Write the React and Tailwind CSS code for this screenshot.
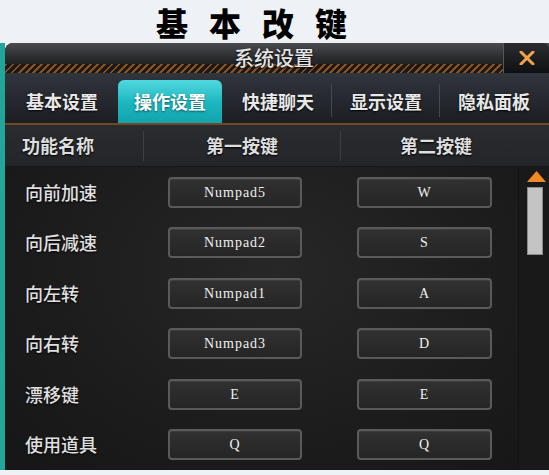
import React from 'react';

const tabs = ['基本设置', '操作设置', '快捷聊天', '显示设置', '隐私面板'];

const rows = [
  ['向前加速', 'Numpad5', 'W'],
  ['向后减速', 'Numpad2', 'S'],
  ['向左转', 'Numpad1', 'A'],
  ['向右转', 'Numpad3', 'D'],
  ['漂移键', 'E', 'E'],
  ['使用道具', 'Q', 'Q'],
];

const cjk = { fontFamily: '"Noto Sans CJK SC", "Noto Sans", sans-serif' };
const keyFont = { fontFamily: '"Liberation Serif", "DejaVu Serif", serif' };

function KeyBox({ label, w }) {
  return (
    <div
      className={`${w} h-[31px] rounded-[4px] border-2 border-[#5a5a5a] bg-gradient-to-b from-[#313131] to-[#252525] flex items-center justify-center text-[14px] tracking-[1px] text-[#f0f0f0] shadow-[inset_0_1px_0_rgba(255,255,255,0.06)]`}
      style={keyFont}
    >
      {label}
    </div>
  );
}

export default function App() {
  return (
    <div className="w-[549px] h-[475px] bg-[#eef1f5] flex flex-col overflow-hidden" style={cjk}>
      {/* page heading */}
      <div className="h-[47px] flex items-center pl-[156px]">
        <span className="text-[32px] leading-[40px] font-black tracking-[21px] text-black">基本改键</span>
      </div>

      {/* window */}
      <div className="flex-1 mb-[5px] border-l-[5px] border-[#22a699] flex">
        <div className="flex-1 flex flex-col bg-[#1c1c1c] rounded-tl-[8px] overflow-hidden">
          {/* title bar */}
          <div className="h-[30px] flex bg-gradient-to-b from-[#4a4c50] via-[#2a2b2e] to-[#141517]">
            <div className="flex-1 flex flex-col">
              <div className="h-[21px] flex items-end justify-center">
                <span className="text-[20px] leading-none font-medium text-[#e4e4e4] translate-y-[4px] translate-x-[20px] [text-shadow:0_1px_2px_#000]">系统设置</span>
              </div>
              <div className="h-[9px] bg-[repeating-linear-gradient(135deg,#8a5220_0px,#8a5220_2px,#1b1a19_2px,#1b1a19_5px)]" />
            </div>
            <div className="w-[46px] flex items-center justify-center bg-gradient-to-b from-[#2c2d30] to-[#0f1012] rounded-tr-[6px] border-l border-[#55575c]">
              <svg width="16" height="14" viewBox="0 0 16 14">
                <path d="M2 1 L14 13 M14 1 L2 13" stroke="#f2a24a" strokeWidth="3" strokeLinecap="round" />
              </svg>
            </div>
          </div>

          {/* tabs */}
          <div className="h-[52px] flex items-end pl-[3px] bg-gradient-to-b from-[#31353d] to-[#1c1e23] border-b-2 border-[#6e4a22]">
            {tabs.map((t, i) => (
              <div key={t} className="w-[108px] h-[43px] flex items-stretch relative">
                {i === 1 ? (
                  <div className="flex-1 mx-[2px] rounded-t-[6px] bg-gradient-to-b from-[#4fd8df] via-[#1cb8c1] to-[#12a3ad] flex items-center justify-center">
                    <span className="text-[18px] font-bold text-white [text-shadow:0_1px_2px_rgba(0,0,0,0.5)]">{t}</span>
                  </div>
                ) : (
                  <div className="flex-1 flex items-center justify-center">
                    <span className="text-[18px] font-bold text-[#e8e8e8] [text-shadow:0_1px_2px_#000]">{t}</span>
                  </div>
                )}
                {(i === 2 || i === 3) && (
                  <div className="absolute right-0 top-[4px] bottom-[6px] w-px bg-[#454950]" />
                )}
              </div>
            ))}
          </div>

          {/* column header */}
          <div className="h-[42px] flex items-center bg-gradient-to-b from-[#2a2c30] to-[#232528] border-b border-[#16171a]">
            <div className="w-[138px] pl-[17px] text-[18px] font-bold text-[#dedede] [text-shadow:0_1px_2px_#000]">功能名称</div>
            <div className="w-px h-[30px] bg-[#3d3f44]" />
            <div className="w-[196px] text-center text-[18px] font-bold text-[#dedede] [text-shadow:0_1px_2px_#000]">第一按键</div>
            <div className="w-px h-[30px] bg-[#3d3f44]" />
            <div className="w-[190px] text-center text-[18px] font-bold text-[#dedede] [text-shadow:0_1px_2px_#000]">第二按键</div>
          </div>

          {/* body */}
          <div className="flex-1 flex bg-[radial-gradient(ellipse_at_50%_35%,#272727_0%,#1c1c1c_60%,#161616_100%)]">
            <div className="flex-1 flex flex-col">
              {rows.map(([name, k1, k2]) => (
                <div key={name} className="h-[50.5px] flex items-center">
                  <div className="w-[163px] pl-[20px] text-[18px] font-medium text-[#e0e0e0] [text-shadow:0_1px_2px_#000]">{name}</div>
                  <KeyBox label={k1} w="w-[134px]" />
                  <div className="w-[55px]" />
                  <KeyBox label={k2} w="w-[135px]" />
                </div>
              ))}
            </div>
            <div className="w-[31px] bg-[#191919] border-l border-[#121212] flex flex-col items-center pt-[3px]">
              <svg width="21" height="13" viewBox="0 0 21 13" className="ml-[4px]">
                <path d="M10.5 1 L20 12 L1 12 Z" fill="#ef8a22" />
              </svg>
              <div className="w-[16px] h-[68px] mt-[4px] ml-[2px] bg-[#c4c4c4] border border-[#8a8a8a]" />
            </div>
          </div>
        </div>
      </div>
    </div>
  );
}
